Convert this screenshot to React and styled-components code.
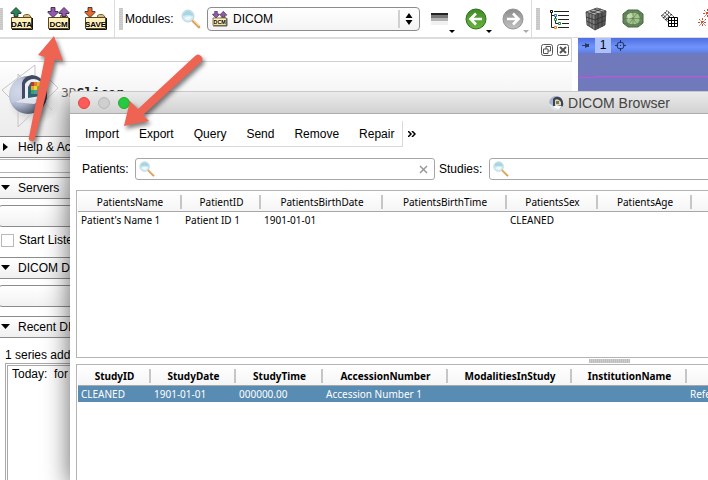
import React from "react";
import styled, { createGlobalStyle } from "styled-components";

const GlobalStyle = createGlobalStyle`
  * { box-sizing: border-box; }
  body {
    margin: 0;
    background: #fff;
    color: #000;
    font-family: "Liberation Sans", Arial, sans-serif;
    font-size: 12px;
    line-height: 16px;
  }
  button, input, select { font: inherit; color: inherit; }
  svg { display: block; flex: none; }
`;

const Screen = styled.div`
  position: relative;
  display: flex;
  flex-direction: column;
  min-height: 100vh;
  overflow: hidden;
`;

/* ---------- main tool bar ---------- */

const MainToolbar = styled.header`
  display: flex;
  align-items: center;
  height: 38px;
  overflow: hidden;
  border-bottom: 1px solid #dcdcdc;
`;

const ToolGroup = styled.div`
  display: flex;
  flex: none;
  align-items: center;
  height: 100%;
  width: ${(p) => p.$width || "auto"};
  border-right: ${(p) => (p.$last ? "none" : "1px solid #dcdcdc")};
`;

const Grip = styled.span`
  flex: none;
  width: 4px;
  height: 22px;
  margin-left: ${(p) => (p.$first ? "-1px" : "4px")};
  background: repeating-linear-gradient(#c4c4c4 0 1px, #d2d2d2 1px 2px);
`;

const ToolButton = styled.button`
  display: flex;
  flex: none;
  align-items: center;
  justify-content: center;
  width: ${(p) => p.$width || 37}px;
  height: 36px;
  padding: 0;
  border: 0;
  background: none;
`;

const ModulesLabel = styled.label`
  flex: none;
  margin-left: 2px;
  width: 53px;
`;

const SelectBox = styled.div`
  position: relative;
  flex: none;
  width: 213px;
  margin: 0 4px 0 3px;
`;

const ModuleSelect = styled.select`
  appearance: none;
  width: 100%;
  height: 24px;
  padding: 0 28px 0 25px;
  border: 1px solid #8c8c8c;
  border-radius: 4px;
  background: linear-gradient(#fff, #f4f4f4);
`;

const SelectIcon = styled.span`
  position: absolute;
  top: 4px;
  left: 5px;
  pointer-events: none;
`;

const SelectArrows = styled.span`
  position: absolute;
  top: 3px;
  right: 3px;
  padding: 3px 4px 3px 5px;
  border-left: 2px solid #d0d0d0;
  pointer-events: none;
`;

/* ---------- dock and viewer ---------- */

const Workspace = styled.main`
  display: grid;
  flex: 1;
  grid-template-columns: 572px 1fr;
  gap: 6px;
`;

const Dock = styled.aside`
  display: flex;
  flex-direction: column;
  border-top: 1px solid #dcdcdc;
`;

const DockTitle = styled.div`
  display: flex;
  align-items: center;
  justify-content: flex-end;
  gap: 4px;
  height: 23px;
  padding-right: 2px;
  border: solid #cfcfcf;
  border-width: 0 1px 1px 0;
`;

const DockButton = styled.button`
  display: flex;
  padding: 0;
  border: 0;
  background: none;
`;

const Brand = styled.div`
  display: flex;
  align-items: flex-start;
  height: 74px;
  background: linear-gradient(#fff, #f4f4f4 45%, #ececec);
`;

const BrandName = styled.span`
  margin-top: 23px;
  color: #666;
  font: 13px/16px "DejaVu Sans Mono", monospace;
  b { color: #222; }
`;

const SectionHeader = styled.button`
  display: flex;
  flex: none;
  align-items: center;
  gap: 8px;
  height: 22px;
  margin-top: ${(p) => p.$gap || 0}px;
  padding: 0 1px;
  border: solid #8c8c8c;
  border-width: 1px 0;
  background: linear-gradient(#fff, #f0f0f0);
  white-space: nowrap;
  text-align: left;
`;

const SectionStrip = styled.div`
  flex: none;
  height: 14px;
  margin-top: 1px;
  border: solid #b4b4b4;
  border-width: 1px 0;
`;

const PanelButton = styled.button`
  flex: none;
  height: 22px;
  margin: 6px 0 0 -2px;
  border: 1px solid #8c8c8c;
  border-radius: 4px;
  background: linear-gradient(#fff, #f2f2f2);
`;

const CheckRow = styled.label`
  display: flex;
  align-items: center;
  gap: 5px;
  height: 16px;
  margin: 5px 0 0 1px;
  white-space: nowrap;
`;

const CheckBox = styled.input`
  appearance: none;
  width: 13px;
  height: 13px;
  margin: 0;
  border: 1px solid #b8b8b8;
  background: #fff;
`;

const Note = styled.p`
  margin: 9px 0 1px 5px;
`;

const HistoryList = styled.div`
  flex: 1;
  margin: -1px 0 -4px 5px;
  padding: 0 4px;
  border: 3px double #a8a8a8;
  white-space: pre;
`;

const Viewer = styled.section`
  overflow: hidden;
  background: #7079bb;
`;

const ViewerBar = styled.div`
  display: flex;
  align-items: center;
  height: 15px;
  padding-left: 4px;
  background: linear-gradient(#4f6fe0, #6f93fb 60%, #5f7fe8);
`;

const ViewerLabel = styled.span`
  width: 16px;
  margin: 0 4px 0 5px;
  background: #abc0ff;
  line-height: 15px;
  text-align: center;
`;

/* ---------- DICOM browser window ---------- */

const BrowserWindow = styled.section`
  position: absolute;
  top: 91px;
  right: -440px;
  bottom: 0;
  left: 70px;
  display: flex;
  flex-direction: column;
  border-top: 1px solid #c8c8c8;
  border-radius: 4px 0 0 0;
  background: #fff;
  box-shadow: 0 6px 26px rgba(0, 0, 0, 0.62);
  clip-path: inset(0 0 0 -40px);
`;

const TitleBar = styled.div`
  display: grid;
  grid-template-columns: 1fr auto 1fr;
  align-items: center;
  height: 22px;
  padding-left: 8px;
  border-bottom: 1px solid #adadad;
  border-radius: 4px 0 0 0;
  background: linear-gradient(#ebebeb, #d2d2d2);
`;

const Lights = styled.div`
  display: flex;
  gap: 8px;
`;

const Light = styled.button`
  width: 12px;
  height: 12px;
  padding: 0;
  border: 1px solid ${(p) => p.$edge};
  border-radius: 50%;
  background: ${(p) => p.$fill};
`;

const WindowTitle = styled.h1`
  display: flex;
  align-items: center;
  gap: 4px;
  margin: 0;
  padding-right: 8px;
  color: #444;
  font-size: 14px;
  font-weight: normal;
`;

const WindowBody = styled.div`
  display: flex;
  flex: 1;
  flex-direction: column;
  padding: 7px 0 0 6px;
`;

const ActionBar = styled.div`
  display: flex;
  align-items: center;
`;

const Actions = styled.nav`
  display: flex;
  align-items: center;
  gap: 20px;
  height: 26px;
  margin-left: 1px;
  padding: 0 8px;
  border: solid #dadada;
  border-width: 0 1px 1px 0;
`;

const ActionButton = styled.button`
  padding: 0;
  border: 0;
  background: none;
`;

const MoreButton = styled(ActionButton)`
  margin-left: 5px;
`;

const SearchRow = styled.div`
  display: flex;
  align-items: center;
  gap: 4px;
  margin-top: 11px;
  padding: 0 6px;
`;

const SearchLabel = styled.label`
  flex: none;
  width: ${(p) => p.$width}px;
`;

const SearchField = styled.div`
  display: flex;
  flex: ${(p) => (p.$width ? `0 0 ${p.$width}px` : 1)};
  align-items: center;
  height: 22px;
  padding: 0 6px 0 3px;
  border: 1px solid #a6a6a6;
  border-radius: 3px;
  background: #fff;
`;

const SearchInput = styled.input`
  flex: 1;
  min-width: 0;
  border: 0;
  outline: 0;
  background: none;
`;

const TableFrame = styled.div`
  flex: ${(p) => (p.$height ? `0 0 ${p.$height}px` : 1)};
  overflow: hidden;
  margin: ${(p) => p.$gap || 0}px 0 ${(p) => (p.$height ? 0 : -2)}px;
  padding-left: 1px;
  border: 1px solid #b4b4b4;
`;

const Table = styled.table`
  width: 100%;
  table-layout: fixed;
  border-collapse: separate;
  border-spacing: 0;
  font: 10px/16px "Noto Sans", "Open Sans", sans-serif;
`;

const Col = styled.col`
  width: ${(p) => p.$width}px;
`;

const HeadCell = styled.th`
  height: 21px;
  padding: 2px 0 0;
  border-bottom: 1px solid #a8a8a8;
  background:
    linear-gradient(#c6c6c6, #c6c6c6) right 4px / 2px 14px no-repeat,
    linear-gradient(#fff, #f5f5f5);
  font-weight: ${(p) => (p.$bold ? 700 : 400)};
  white-space: nowrap;
`;

const BodyRow = styled.tr`
  background: ${(p) => (p.$selected ? "#598cb2" : "none")};
  color: ${(p) => (p.$selected ? "#fff" : "#000")};
`;

const Cell = styled.td`
  height: 16px;
  padding: 0 0 0 3px;
  white-space: nowrap;
`;

const Splitter = styled.div`
  display: flex;
  flex: none;
  justify-content: center;
  height: 6px;
  padding: 1px 6px 1px 0;
`;

const SplitGrip = styled.span`
  width: 41px;
  background: repeating-linear-gradient(90deg, #bdbdbd 0 1px, #cdcdcd 1px 2px);
`;

const Annotations = styled.svg`
  position: absolute;
  top: 0;
  left: 0;
  pointer-events: none;
  filter: drop-shadow(2px 3px 2px rgba(0, 0, 0, 0.5));
`;

/* ---------- icons ---------- */

const IconText = styled.text`
  font: 8px "Liberation Sans", Arial, sans-serif;
  font-weight: 700;
  text-anchor: middle;
`;

const UP = "M0 5L5 0L10 5V6H7V9H3V6H0Z";
const DOWN = "M3 0H7V4H10V5L5 10L0 5V4H3Z";

function FolderIcon({ label, arrows, size = 24 }) {
  return (
    <svg width={size} height={size} viewBox="0 0 24 24" aria-hidden="true">
      <path d="M13.500 10V8.500L15.500 7.500H18.500L20.500 9V10" fill="#d7b77b" stroke="#7c6637" />
      <path d="M1.500 10.500H21.500V21.500H1.500Z" fill="#fff0bb" stroke="#554723" />
      <path d="M2 22.500H22.500V11" fill="none" stroke="#111" />
      {arrows.map((a) => (
        <path key={a.x} transform={`translate(${a.x} 0.5)`} d={a.down ? DOWN : UP} fill={a.color} stroke="#222" strokeWidth=".8" />
      ))}
      <IconText x="11.5" y="20">{label}</IconText>
    </svg>
  );
}

const DCM_ARROWS = [
  { x: 1, down: true, color: "#9558b2" },
  { x: 12, down: false, color: "#9558b2" },
];

function Magnifier({ size = 20 }) {
  return (
    <svg width={size} height={size} viewBox="0 0 20 20" aria-hidden="true">
      <path d="M11 11L18 18" stroke="#d9a05e" strokeWidth="2.600" strokeLinecap="round" />
      <path d="M12 11L18 17" stroke="#ffd99a" strokeWidth="1" />
      <circle cx="7" cy="7" r="6" fill="#cfe8f1" stroke="#c2d4da" strokeWidth="1" />
      <path d="M2 7A5 5 0 0 1 12 7Q7 5 2 7" fill="#a5d6e6" />
      <path d="M3 9Q7 6 11 8Q9 12 6 11Z" fill="#eef9fc" />
    </svg>
  );
}

function UpDownIcon() {
  return (
    <svg width="8" height="12" viewBox="0 0 8 12" aria-hidden="true">
      <path d="M0.500 5L4 0L7.500 5ZM0.500 7H7.500L4 12Z" />
    </svg>
  );
}

function LayoutIcon() {
  return (
    <svg width="25" height="28" viewBox="0 0 25 28" aria-hidden="true">
      <path d="M1 8H18V10H1Z" fill="#222" />
      <path d="M1 10H18V13H1Z" fill="#777" />
      <path d="M1 13H18V16H1Z" fill="#b4b4b4" />
      <path d="M1 16H18V20H1Z" fill="#f1f1f1" />
      <path d="M19 25H25L22 28Z" />
    </svg>
  );
}

function NavIcon({ back }) {
  const id = back ? "back-fill" : "next-fill";
  return (
    <svg width="29" height="28" viewBox="0 0 29 28" aria-hidden="true">
      <defs>
        <linearGradient id={id} x2="0" y2="1">
          <stop stopColor={back ? "#3f8a26" : "#8c8c8c"} />
          <stop offset="1" stopColor={back ? "#69b53e" : "#c2c2c2"} />
        </linearGradient>
      </defs>
      <circle cx="11" cy="14" r="10" fill={`url(#${id})`} stroke={back ? "#2d6f1d" : "#939393"} />
      <path
        d={back ? "M17 14H6M11 8.500L5.500 14L11 19.500" : "M5 14H16M11 8.500L16.500 14L11 19.500"}
        fill="none" stroke="#fff" strokeWidth="2.600"
      />
      <path d="M21 25H27L24 28Z" fill={back ? "#000" : "#aaa"} />
    </svg>
  );
}

function TreeIcon() {
  return (
    <svg width="20" height="20" viewBox="0 0 20 20" fill="none" aria-hidden="true">
      <path d="M2.500 2V18.500H5M2.500 6.500H5M6.500 8V10.500M6.500 10.500V14.500H9M5 2.500H20M9 6.500H20M9 10.500H20M13 14.500H20M9 18.500H20" stroke="#222" />
      <path d="M1.500 1.500H3.500V3.500H1.500Z" fill="#fff" stroke="#000" />
      <path d="M5.500 5.500H7.500V7.500H5.500Z" fill="#fff" stroke="#2272c8" />
      <path d="M5.500 9.500H7.500V11.500H5.500Z" fill="#fff" stroke="#198a3c" />
      <path d="M9.500 13.500H11.500V15.500H9.500Z" fill="#fff" stroke="#198a3c" />
      <path d="M5.500 17.500H7.500V19.500H5.500Z" fill="#fff" stroke="#de801c" />
    </svg>
  );
}

function CubeIcon() {
  return (
    <svg width="22" height="24" viewBox="0 0 22 24" aria-hidden="true">
      <path d="M1 5L12 1L21 4L10 8Z" fill="#b4b4b4" />
      <path d="M1 5L10 8V23L2 18Z" fill="#858585" />
      <path d="M10 8L21 4L20 18L10 23Z" fill="#585858" />
      <path d="M4 6V19M7 7V21M13 7V21.500M17 6V20M1 10L10 13L21 8.500M1.500 14L10 18L20.500 13M5 4L14 7M9 2L18 5M16 2L5 6.500" fill="none" stroke="#303030" strokeWidth=".8" />
      <path d="M1 5L12 1L21 4L20 18L10 23L2 18ZM1 5L10 8L21 4M10 8V23" fill="none" stroke="#3c3c3c" strokeWidth=".8" />
    </svg>
  );
}

function ModelIcon() {
  return (
    <svg width="22" height="20" viewBox="0 0 22 20" aria-hidden="true">
      <path d="M6 1H16L21 5V14L16 18H6L1 14V5Z" fill="#65875b" stroke="#4a6544" />
      <path d="M7 4H15L18 8V12L15 15H7L4 12V8Z" fill="#a4c48c" />
      <path d="M7 4L15 15M15 4L7 15M11 1V18M1 9.500H21M6 1L4 8L6 18M16 1L18 8L16 18M1 5L7 4M15 4L21 5M1 14L7 15M15 15L21 14" fill="none" stroke="#55794c" strokeWidth=".6" />
      <path d="M5 6L9 4L11 8L6 10Z" fill="#d4e8c4" opacity=".7" />
    </svg>
  );
}

function TransformIcon() {
  return (
    <svg width="18" height="18" viewBox="0 0 18 18" fill="none" stroke="#000" aria-hidden="true">
      <path d="M0.500 6L6 0.500L13 7M0.500 6L8 13M2.500 8L8 2.500M4.500 10L10 4.500M2 4.500L8 11M4 2.500L10 8" strokeDasharray="1.500 .7" />
      <path d="M7.500 7.500H16.500V16.500H7.500Z" fill="#fff" />
      <path d="M10.500 7.500V16.500M13.500 7.500V16.500M7.500 10.500H16.500M7.500 13.500H16.500" />
    </svg>
  );
}

function MarkupIcon() {
  return (
    <svg width="18" height="20" viewBox="0 0 18 20" fill="none" stroke="#c94f35" aria-hidden="true">
      <path d="M4.500 9V17M0 13.500H9M1 10L8 17M8 10L1 17M9.500 0V8M5 4.500H14M6 1L13 8M13 1L6 8M14.500 10V18M10 14.500H18M11 11L18 18M18 11L11 18" strokeDasharray="2 1" />
    </svg>
  );
}

function FloatIcon() {
  return (
    <svg width="12" height="12" viewBox="0 0 12 12" fill="none" stroke="#555" aria-hidden="true">
      <rect x=".5" y=".5" width="11" height="11" rx="2" />
      <path d="M5 5V2.500H9.500V7H7M2.500 5H7V9.500H2.500Z" />
    </svg>
  );
}

function CloseIcon() {
  return (
    <svg width="12" height="12" viewBox="0 0 12 12" fill="none" stroke="#555" aria-hidden="true">
      <rect x=".5" y=".5" width="11" height="11" rx="2" />
      <path d="M3 3L9 9M9 3L3 9" strokeWidth="2" />
    </svg>
  );
}

function SlicerLogo() {
  return (
    <svg width="61" height="74" viewBox="0 0 61 74" aria-hidden="true">
      <defs>
        <radialGradient id="logo-ball" cx=".25" cy=".4" r=".75">
          <stop stopColor="#e6ebf5" />
          <stop offset=".5" stopColor="#a9b3ca" />
          <stop offset=".85" stopColor="#5d6479" />
          <stop offset="1" stopColor="#33384a" />
        </radialGradient>
        <radialGradient id="logo-shade">
          <stop stopColor="#666" stopOpacity=".6" />
          <stop offset="1" stopColor="#999" stopOpacity="0" />
        </radialGradient>
      </defs>
      <ellipse cx="34" cy="42" rx="26" ry="20" fill="url(#logo-shade)" />
      <path d="M35 3V50M35 3L2 28L18 44M18 12V65L58 26L50 18M18 12L52 48" fill="none" stroke="#c4c4c4" />
      <circle cx="28" cy="33" r="19" fill="url(#logo-ball)" />
      <path d="M22 40V21Q24 14 32 13Q42 14 46 24Q48 32 46 38L38 42Z" fill="#414a60" />
      <path d="M25 38V22Q28 17 34 17Q41 18 43 24L44 36L36 40Z" fill="#eceef2" />
      <path d="M28 36V25L31 20H41V34Z" fill="#2b6276" />
      <path d="M31 20H34V24H31Z" fill="#b43c2c" />
      <path d="M34 20H37V24H34Z" fill="#e27a2c" />
      <path d="M37 20H41V24H37Z" fill="#e9b52c" />
      <path d="M31 24H34V28H31Z" fill="#e9a52c" />
      <path d="M34 24H37V28H34Z" fill="#ecd53a" />
      <path d="M37 24H41V28H37Z" fill="#83b13c" />
      <path d="M31 28H34V32H31Z" fill="#3d9f60" />
      <path d="M34 28H37V32H34Z" fill="#3d9fb8" />
      <path d="M37 28H41V32H37Z" fill="#d9742c" />
      <path d="M15 40L25 36L44 38L34 42Z" fill="#dfe3ec" />
      <path d="M22 16V37L12 41Q8 33 12 25Q15 18 22 16Z" fill="#c8d0e2" opacity=".7" />
    </svg>
  );
}

function TitleIcon() {
  return (
    <svg width="16" height="16" viewBox="0 0 16 16" aria-hidden="true">
      <circle cx="8" cy="8" r="7" fill="#a9b4cb" />
      <path d="M1 8A7 7 0 0 0 12 14L5 11Z" fill="#dfe3ec" />
      <path d="M5 11V4Q8 0 13 3Q16 7 15 11L11 13Z" fill="#3c4356" />
      <path d="M7 10V5Q10 3 13 7V10Z" fill="#d8dbc7" />
      <path d="M8 6H11V9H8Z" fill="#8a7c32" />
      <path d="M5 12L8 10L14 11L11 14Z" fill="#fff" />
    </svg>
  );
}

function Triangle({ open }) {
  return (
    <svg width="9" height="8" viewBox="0 0 9 8" aria-hidden="true">
      <path d={open ? "M0 1H9L4.500 6Z" : "M2 0L7 4L2 8Z"} />
    </svg>
  );
}

function Pin() {
  return (
    <svg width="8" height="7" viewBox="0 0 8 7" aria-hidden="true">
      <path d="M0 3H3V1L5 2H7V5H5L3 6V4H0Z" fill="#293962" />
    </svg>
  );
}

function Crosshair() {
  return (
    <svg width="11" height="11" viewBox="0 0 11 11" fill="none" stroke="#24355e" aria-hidden="true">
      <circle cx="5.500" cy="5.500" r="3.500" />
      <path d="M5.500 0V3M5.500 8V11M0 5.500H3M8 5.500H11M5 5.500H6" />
    </svg>
  );
}

function ClearIcon() {
  return (
    <svg width="9" height="9" viewBox="0 0 9 9" aria-hidden="true">
      <path d="M1 1L8 8M8 1L1 8" stroke="#999" strokeWidth="1.500" />
    </svg>
  );
}

function MoreIcon() {
  return (
    <svg width="8" height="6" viewBox="0 0 8 6" aria-hidden="true">
      <path d="M0 0L3 3L0 6M4 0L7 3L4 6" fill="none" stroke="#000" strokeWidth="1.500" />
    </svg>
  );
}

/* ---------- data ---------- */

const PATIENTS = {
  widths: [104, 79, 122, 124, 91, 94],
  heads: ["PatientsName", "PatientID", "PatientsBirthDate", "PatientsBirthTime", "PatientsSex", "PatientsAge"],
  row: ["Patient's Name 1", "Patient ID 1", "1901-01-01", "", "CLEANED", ""],
};

const STUDIES = {
  widths: [73, 85, 87, 125, 124, 115],
  heads: ["StudyID", "StudyDate", "StudyTime", "AccessionNumber", "ModalitiesInStudy", "InstitutionName"],
  row: ["CLEANED", "1901-01-01", "000000.00", "Accession Number 1", "", "", "Refe"],
};

function DataTable({ data, bold, selected }) {
  return (
    <Table>
      <colgroup>
        {data.widths.map((w, i) => <Col key={i} $width={w} />)}
        <col />
      </colgroup>
      <thead>
        <tr>
          {data.heads.map((h, i) => <HeadCell key={i} $bold={bold}>{h}</HeadCell>)}
          <HeadCell />
        </tr>
      </thead>
      <tbody>
        <BodyRow $selected={selected}>
          {data.row.map((c, i) => <Cell key={i}>{c}</Cell>)}
        </BodyRow>
      </tbody>
    </Table>
  );
}

function Section({ title, open, gap }) {
  return (
    <SectionHeader $gap={gap} aria-expanded={!!open}>
      <Triangle open={open} />
      {title}
    </SectionHeader>
  );
}

export default function App() {
  return (
    <Screen>
      <GlobalStyle />
      <MainToolbar>
        <ToolGroup $width="115px">
          <Grip $first />
          <ToolButton aria-label="Load data"><FolderIcon label="DATA" arrows={[{ x: 1, color: "#278459" }]} /></ToolButton>
          <ToolButton aria-label="Load DICOM"><FolderIcon label="DCM" arrows={DCM_ARROWS} /></ToolButton>
          <ToolButton aria-label="Save"><FolderIcon label="SAVE" arrows={[{ x: 1, down: true, color: "#e4692c" }]} /></ToolButton>
        </ToolGroup>
        <ToolGroup $width="417px">
          <Grip />
          <ModulesLabel htmlFor="module">Modules:</ModulesLabel>
          <ToolButton $width={26} aria-label="Find module"><Magnifier /></ToolButton>
          <SelectBox>
            <ModuleSelect id="module" defaultValue="DICOM">
              <option>DICOM</option>
            </ModuleSelect>
            <SelectIcon><FolderIcon label="DCM" arrows={DCM_ARROWS} size={16} /></SelectIcon>
            <SelectArrows><UpDownIcon /></SelectArrows>
          </SelectBox>
          <ToolButton aria-label="Module history"><LayoutIcon /></ToolButton>
          <ToolButton aria-label="Previous module"><NavIcon back /></ToolButton>
          <ToolButton aria-label="Next module"><NavIcon /></ToolButton>
        </ToolGroup>
        <ToolGroup $last>
          <Grip />
          <ToolButton aria-label="Data tree"><TreeIcon /></ToolButton>
          <ToolButton aria-label="Volumes"><CubeIcon /></ToolButton>
          <ToolButton aria-label="Models"><ModelIcon /></ToolButton>
          <ToolButton aria-label="Transforms"><TransformIcon /></ToolButton>
          <ToolButton aria-label="Markups"><MarkupIcon /></ToolButton>
        </ToolGroup>
      </MainToolbar>

      <Workspace>
        <Dock>
          <DockTitle>
            <DockButton aria-label="Float panel"><FloatIcon /></DockButton>
            <DockButton aria-label="Close panel"><CloseIcon /></DockButton>
          </DockTitle>
          <Brand>
            <SlicerLogo />
            <BrandName>3D<b>Slicer</b></BrandName>
          </Brand>
          <Section title="Help & Acknowledgement" />
          <SectionStrip />
          <Section title="Servers" open gap={4} />
          <PanelButton aria-label="Servers" />
          <CheckRow><CheckBox type="checkbox" />Start Listener</CheckRow>
          <Section title="DICOM Database" open gap={9} />
          <PanelButton aria-label="Database" />
          <Section title="Recent DICOM Activity" open gap={9} />
          <Note>1 series added to database</Note>
          <HistoryList>{"Today:  for Patient"}</HistoryList>
        </Dock>
        <Viewer>
          <ViewerBar>
            <Pin />
            <ViewerLabel>1</ViewerLabel>
            <Crosshair />
          </ViewerBar>
          <svg width="100%" height="40" aria-hidden="true">
            <path d="M0 24.500H19V23.500H2000" fill="none" stroke="#c94fe0" />
          </svg>
        </Viewer>
      </Workspace>

      <BrowserWindow>
        <TitleBar>
          <Lights>
            <Light aria-label="Close" $fill="#fc5b57" $edge="#e2443f" />
            <Light aria-label="Minimize" $fill="#cfcfcf" $edge="#b8b8b8" />
            <Light aria-label="Zoom" $fill="#28c940" $edge="#1dad2b" />
          </Lights>
          <WindowTitle><TitleIcon />DICOM Browser</WindowTitle>
        </TitleBar>
        <WindowBody>
          <ActionBar>
            <Actions>
              {["Import", "Export", "Query", "Send", "Remove", "Repair"].map((a) => (
                <ActionButton key={a}>{a}</ActionButton>
              ))}
            </Actions>
            <MoreButton aria-label="More actions"><MoreIcon /></MoreButton>
          </ActionBar>
          <SearchRow>
            <SearchLabel htmlFor="patients" $width={49}>Patients:</SearchLabel>
            <SearchField $width={300}>
              <Magnifier size={16} />
              <SearchInput id="patients" />
              <ActionButton aria-label="Clear search"><ClearIcon /></ActionButton>
            </SearchField>
            <SearchLabel htmlFor="studies" $width={46}>Studies:</SearchLabel>
            <SearchField>
              <Magnifier size={16} />
              <SearchInput id="studies" />
            </SearchField>
          </SearchRow>
          <TableFrame $gap={10} $height={168}>
            <DataTable data={PATIENTS} />
          </TableFrame>
          <Splitter><SplitGrip /></Splitter>
          <TableFrame>
            <DataTable data={STUDIES} bold selected />
          </TableFrame>
        </WindowBody>
      </BrowserWindow>

      <Annotations width="240" height="160" viewBox="0 0 240 160" aria-hidden="true">
        <path d="M54 36L63 61L55 59L35 138Q34 142 31 141Q28 140 29 137L45 57L38 55Z" fill="#ee6352" />
        <path d="M124 126L130 101L138 109L195 56Q198 53 201 56Q204 59 201 62L143 115L149 121Z" fill="#ee6352" />
      </Annotations>
    </Screen>
  );
}
